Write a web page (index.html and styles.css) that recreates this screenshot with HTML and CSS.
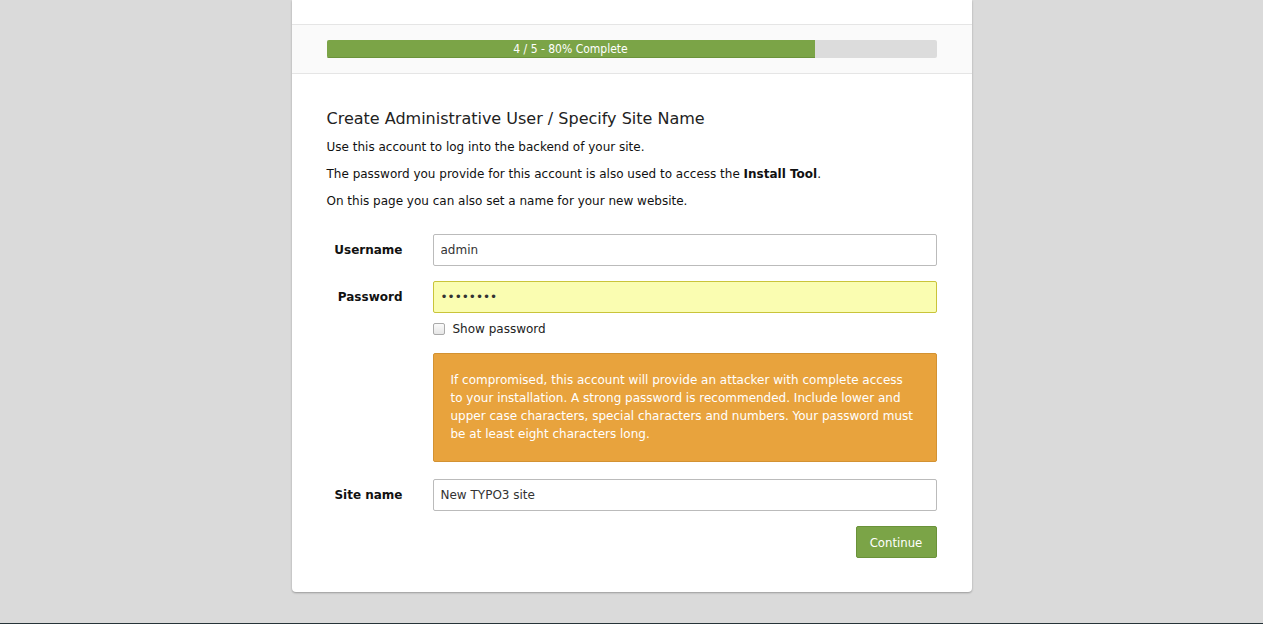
FILE: index.html
```html
<!DOCTYPE html>
<html>
<head>
<meta charset="utf-8">
<link rel="stylesheet" href="styles.css">
</head>
<body>
<div class="page">
  <div class="card">
    <div class="card-top"></div>
    <div class="card-progress">
      <div class="progress">
        <div class="progress-bar" style="width: 80%">4 / 5 - 80% Complete</div>
      </div>
    </div>
    <div class="card-body">
      <h2 class="title">Create Administrative User / Specify Site Name</h2>
      <p class="text">Use this account to log into the backend of your site.</p>
      <p class="text">The password you provide for this account is also used to access the <strong>Install Tool</strong>.</p>
      <p class="text">On this page you can also set a name for your new website.</p>

      <form class="form">
        <div class="row">
          <label class="label" for="u">Username</label>
          <input class="input" id="u" type="text" value="admin">
        </div>
        <div class="row">
          <label class="label" for="p">Password</label>
          <div class="field">
            <input class="input input-filled" id="p" type="password" value="password">
            <label class="check"><span class="box"></span>Show password</label>
            <div class="alert">If compromised, this account will provide an attacker with complete access to your installation. A strong password is recommended. Include lower and upper case characters, special characters and numbers. Your password must be at least eight characters long.</div>
          </div>
        </div>
        <div class="row">
          <label class="label" for="s">Site name</label>
          <input class="input" id="s" type="text" value="New TYPO3 site">
        </div>
        <div class="actions">
          <button class="btn" type="button">Continue</button>
        </div>
      </form>
    </div>
  </div>
  <div class="taskbar"></div>
</div>
</body>
</html>
```
FILE: styles.css
```css
html, body {
  margin: 0;
  padding: 0;
}
body {
  background: #dadada;
  font-family: "DejaVu Sans", Verdana, sans-serif;
  font-size: 12px;
  color: #111;
}
.page {
  display: flex;
  flex-direction: column;
  align-items: center;
  height: 624px;
  overflow: hidden;
}
.card {
  width: 680px;
  background: #fff;
  border-radius: 0 0 4px 4px;
  box-shadow: 0 1px 2px rgba(0,0,0,0.3);
}
.card-top {
  height: 24px;
  border-bottom: 1px solid #e5e5e5;
}
.card-progress {
  background: #fafafa;
  border-bottom: 1px solid #e5e5e5;
  padding: 15px 35px 15px 35px;
}
.progress {
  height: 18px;
  background: #dcdcdc;
  border-radius: 2px;
  overflow: hidden;
}
.progress-bar {
  height: 18px;
  background: #7ba447;
  box-shadow: inset 0 -1px 0 #6b933b;
  color: #fff;
  text-align: center;
  font-family: "DejaVu Sans Condensed", "DejaVu Sans", sans-serif;
  font-stretch: condensed;
  font-size: 12px;
  line-height: 18px;
}
.card-body {
  padding: 35px 35px 34px 35px;
}
.title {
  margin: 0;
  font-weight: normal;
  font-size: 16px;
  line-height: 20px;
  color: #222;
}
.text {
  margin: 9px 0 0 0;
  line-height: 18px;
}
.form {
  margin-top: 24px;
  display: flex;
  flex-direction: column;
  gap: 15px;
}
.row {
  display: grid;
  grid-template-columns: 76px 1fr;
  column-gap: 30px;
  align-items: start;
}
.label {
  text-align: right;
  font-weight: bold;
  line-height: 32px;
}
.field {
  display: flex;
  flex-direction: column;
}
.input {
  box-sizing: border-box;
  height: 32px;
  width: 100%;
  margin: 0;
  padding: 0 7px;
  border: 1px solid #bbb;
  border-radius: 2px;
  background: #fff;
  font-family: "DejaVu Sans", Verdana, sans-serif;
  font-size: 12px;
  color: #333;
}
.input-filled {
  background: #fafdb1;
  border-color: #c9c43a;
}
.check {
  display: flex;
  align-items: center;
  gap: 8px;
  margin-top: 9px;
  line-height: 14px;
  color: #222;
}
.box {
  box-sizing: border-box;
  width: 12px;
  height: 12px;
  border: 1px solid #aaa;
  border-radius: 2px;
  background: linear-gradient(#fafafa, #e6e6e6);
}
.alert {
  margin-top: 17px;
  margin-bottom: 2px;
  box-sizing: border-box;
  background: #e8a33d;
  border: 1px solid #d39232;
  border-radius: 2px;
  color: #fff;
  line-height: 18px;
  padding: 17px 17px 18px 17px;
}
.actions {
  display: flex;
  justify-content: flex-end;
  margin-top: 0;
}
.btn {
  width: 81px;
  height: 32px;
  background: #7ba447;
  border: 1px solid #6a9239;
  border-radius: 2px;
  color: #fff;
  font-family: "DejaVu Sans Condensed", "DejaVu Sans", sans-serif;
  font-stretch: condensed;
  font-size: 13px;
  padding: 0;
}
.taskbar {
  margin-top: auto;
  width: 100%;
  height: 1px;
  background: #263338;
}
```
